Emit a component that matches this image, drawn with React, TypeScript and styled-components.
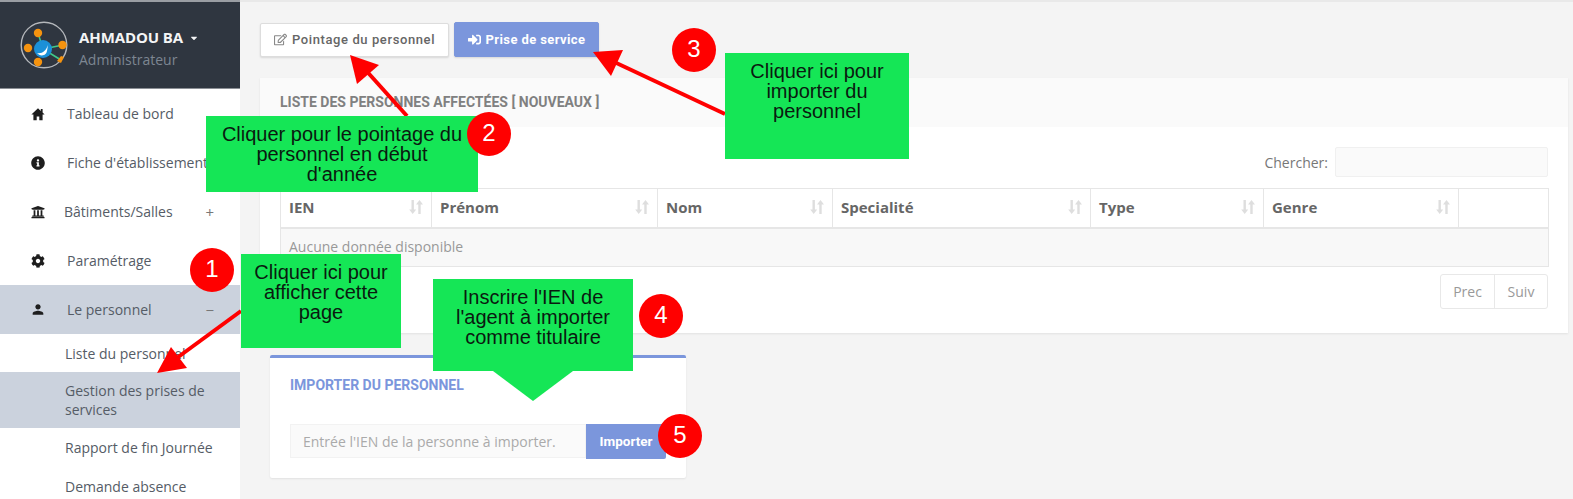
import React, { FC } from 'react'
import styled, { createGlobalStyle } from 'styled-components'
import { FaInfoCircle, FaUniversity, FaCog, FaRegEdit, FaSignInAlt, FaCaretDown } from 'react-icons/fa'
import { MdPerson } from 'react-icons/md'

const GlobalStyle = createGlobalStyle`
html, body {
 margin: 0;
 padding: 0;
 background: #f4f4f4;
}
* {
 box-sizing: border-box;
}
`

const HomeIcon: FC = () => (
 <svg viewBox="0 0 14 14" width="14" height="14" fill="currentColor">
  <path d="M7 1.2 0.4 7.6h2v5.6h3.3V9.4h2.6v3.8h3.3V7.6h2l-2-2V2h-1.8v1.9z" />
 </svg>
)

const menu = [
 { label: 'Tableau de bord', icon: <HomeIcon /> },
 { label: "Fiche d'établissement", icon: <FaInfoCircle /> },
 { label: 'Bâtiments/Salles', icon: <FaUniversity />, sign: '+', shift: true },
 { label: 'Paramétrage', icon: <FaCog /> },
 { label: 'Le personnel', icon: <MdPerson size={19} />, sign: '−', active: true },
]

const subMenu = [
 { label: 'Liste du personnel', height: 38 },
 { label: 'Gestion des prises de services', height: 56, active: true },
 { label: 'Rapport de fin Journée', height: 38 },
 { label: 'Demande absence', height: 40 },
]

const columns = [
 { label: 'IEN', width: 151 },
 { label: 'Prénom', width: 226 },
 { label: 'Nom', width: 175 },
 { label: 'Specialité', width: 258 },
 { label: 'Type', width: 173 },
 { label: 'Genre', width: 195 },
 { label: '', width: 90 },
]

const SortIcon: FC = () => (
 <SortSvg viewBox="0 0 14 16" width="14" height="16">
  <path d="M2.5 1h2.4v9.5h2.3L3.7 15 .2 10.5h2.3z" />
  <path d="M9.3 15h2.4V5.5H14L10.5 1 7 5.5h2.3z" />
 </SortSvg>
)

const Logo: FC = () => (
 <svg width="48" height="48" viewBox="0 0 48 48">
  <circle cx="24" cy="24" r="22.8" fill="#2f3640" stroke="#b4b7bb" strokeWidth="1.4" />
  <g stroke="#3fc98a" strokeWidth="1.6">
   <line x1="23" y1="28" x2="43" y2="24" />
   <line x1="23" y1="28" x2="41" y2="39" />
   <line x1="23" y1="28" x2="18" y2="12" />
  </g>
  <g fill="#f5930f">
   <circle cx="18" cy="12" r="4.2" />
   <circle cx="8" cy="27" r="4.2" />
   <circle cx="42.5" cy="24" r="4.2" />
   <circle cx="18" cy="41" r="4.2" />
   <path d="M41 35l3 1-3 6-4-2z" />
  </g>
  <circle cx="23" cy="28" r="9" fill="#1b90d8" />
  <path d="M17 32c5 1 9-2 11-8-1 6-1 9-4 10-3 1-5 0-7-2z" fill="#fff" />
 </svg>
)

const App: FC = () => {
 return (
  <Page>
   <GlobalStyle />
   <Sidebar>
    <Profile>
     <Logo />
     <ProfileText>
      <ProfileName>AHMADOU BA <FaCaretDown size={10} /></ProfileName>
      <ProfileRole>Administrateur</ProfileRole>
     </ProfileText>
    </Profile>
    {menu.map(item => (
     <MenuItem key={item.label} $active={item.active}>
      <MenuIcon>{item.icon}</MenuIcon>
      <MenuLabel $shift={item.shift}>{item.label}</MenuLabel>
      {item.sign && <MenuSign>{item.sign}</MenuSign>}
     </MenuItem>
    ))}
    {subMenu.map(item => (
     <SubItem key={item.label} $active={item.active} $height={item.height}>
      {item.label}
     </SubItem>
    ))}
   </Sidebar>

   <Main>
    <Toolbar>
     <WhiteButton><FaRegEdit size={13} /> Pointage du personnel</WhiteButton>
     <BlueButton><FaSignInAlt size={13} /> Prise de service</BlueButton>
    </Toolbar>

    <Card>
     <CardHeader>LISTE DES PERSONNES AFFECTÉES [ NOUVEAUX ]</CardHeader>
     <CardBody>
      <SearchRow>
       <SearchLabel>Chercher:</SearchLabel>
       <SearchInput />
      </SearchRow>
      <Table>
       <thead>
        <tr>
         {columns.map((col, i) => (
          <HeadCell key={i} style={{ width: col.width }}>
           <HeadInner>
            {col.label}
            {col.label && <SortIcon />}
           </HeadInner>
          </HeadCell>
         ))}
        </tr>
       </thead>
       <tbody>
        <tr>
         <EmptyCell colSpan={7}>Aucune donnée disponible</EmptyCell>
        </tr>
       </tbody>
      </Table>
      <TableFooter>
       <FooterInfo>Aucune donnée</FooterInfo>
       <Pager>
        <PagerButton>Prec</PagerButton>
        <PagerButton>Suiv</PagerButton>
       </Pager>
      </TableFooter>
     </CardBody>
    </Card>

    <ImportCard>
     <ImportTitle>IMPORTER DU PERSONNEL</ImportTitle>
     <ImportRow>
      <ImportInput placeholder="Entrée l'IEN de la personne à importer." />
      <ImportButton>Importer</ImportButton>
     </ImportRow>
    </ImportCard>
   </Main>

   <Arrows viewBox="0 0 1573 499" width="1573" height="499">
    <g stroke="#ff0000" strokeWidth="4" fill="none">
     <line x1="241" y1="311" x2="170" y2="363" />
     <line x1="407" y1="116" x2="362" y2="66" />
     <line x1="725" y1="114" x2="610" y2="60" />
    </g>
    <g fill="#ff0000">
     <polygon points="157,373 171,347 187,368" />
     <polygon points="350,55 379,65 357,84" />
     <polygon points="593,52 623,50 611,76" />
    </g>
   </Arrows>

   <Callout $x={206} $y={116} $w={272} $h={76}>
    Cliquer pour le pointage du<br />personnel en début<br />d'année
   </Callout>
   <Callout $x={725} $y={53} $w={184} $h={106}>
    Cliquer ici pour<br />importer du<br />personnel
   </Callout>
   <Callout $x={241} $y={254} $w={160} $h={94}>
    Cliquer ici pour<br />afficher cette<br />page
   </Callout>
   <Callout $x={433} $y={279} $w={200} $h={92}>
    Inscrire l'IEN de<br />l'agent à importer<br />comme titulaire
    <CalloutTail />
   </Callout>

   <Badge $x={212} $y={270}>1</Badge>
   <Badge $x={489} $y={134}>2</Badge>
   <Badge $x={694} $y={50}>3</Badge>
   <Badge $x={661} $y={316}>4</Badge>
   <Badge $x={680} $y={436}>5</Badge>
  </Page>
 )
}

export default App


const Page = styled.div`
position: relative;
display: flex;
width: 1573px;
height: 499px;
overflow: hidden;
background: #f4f4f4;
font-family: "Open Sans", sans-serif;
`

const Sidebar = styled.div`
flex: 0 0 240px;
background: #fff;
`

const Profile = styled.div`
height: 89px;
display: flex;
align-items: center;
gap: 11px;
padding-left: 20px;
background: #2f3640;
border-top: 2px solid #9a9ea3;
border-bottom: 1px solid #8b8f95;
`

const ProfileText = styled.div`
display: flex;
flex-direction: column;
gap: 3px;
padding-top: 5px;
`

const ProfileName = styled.div`
font-family: "Open Sans", sans-serif;
font-size: 15px;
font-weight: 700;
letter-spacing: -0.1px;
color: #f4f5f6;
svg {
 vertical-align: middle;
 margin-left: 2px;
}
`

const ProfileRole = styled.div`
font-size: 14px;
color: #7d8692;
`

const MenuItem = styled.div<{ $active?: boolean }>`
height: 49px;
display: flex;
align-items: center;
padding-left: 30px;
padding-right: 26px;
background: ${p => (p.$active ? '#cbd2dd' : '#fff')};
`

const MenuIcon = styled.span`
width: 16px;
display: flex;
justify-content: center;
color: #1e1e1e;
font-size: 14px;
`

const MenuLabel = styled.span<{ $shift?: boolean }>`
margin-left: ${p => (p.$shift ? '18px' : '21px')};
font-size: 14px;
color: #555c66;
white-space: nowrap;
`

const MenuSign = styled.span`
margin-left: auto;
font-size: 15px;
color: #777;
`

const SubItem = styled.div<{ $active?: boolean; $height: number }>`
height: ${p => p.$height}px;
display: flex;
align-items: center;
padding: 0 20px 0 65px;
font-size: 14px;
line-height: 19px;
color: #555c66;
background: ${p => (p.$active ? '#cbd2dd' : '#fff')};
`

const Main = styled.div`
flex: 1;
min-width: 0;
padding: 20px 5px 0 20px;
border-top: 2px solid #e9e9e9;
`

const Toolbar = styled.div`
display: flex;
align-items: center;
gap: 5px;
height: 35px;
`

const WhiteButton = styled.button`
width: 189px;
height: 34px;
display: flex;
align-items: center;
justify-content: center;
gap: 5px;
padding: 0;
background: #fff;
border: 1px solid #ddd;
border-radius: 2px;
box-shadow: 0 1px 2px rgba(0, 0, 0, 0.12);
font-family: Roboto, sans-serif;
font-size: 13px;
font-weight: 500;
letter-spacing: 0.6px;
color: #666;
svg {
 color: #888;
}
`

const BlueButton = styled(WhiteButton)`
width: 145px;
height: 35px;
background: #7b96dc;
border-color: #7b96dc;
font-weight: 700;
color: #fff;
letter-spacing: 0.4px;
svg {
 color: #fff;
}
`

const Card = styled.div`
margin-top: 21px;
background: #fff;
box-shadow: 0 1px 2px rgba(0, 0, 0, 0.08);
`

const CardHeader = styled.div`
height: 49px;
display: flex;
align-items: center;
padding: 0 0 2px 20px;
background: #fafafa;
font-family: Roboto, sans-serif;
font-size: 14px;
font-weight: 700;
color: #808080;
`

const CardBody = styled.div`
padding: 20px 20px 24px 20px;
`

const SearchRow = styled.div`
display: flex;
justify-content: flex-end;
align-items: center;
gap: 7px;
height: 30px;
`

const SearchLabel = styled.span`
font-size: 14px;
color: #777;
`

const SearchInput = styled.div`
width: 213px;
height: 30px;
background: #fafafa;
border: 1px solid #f0f0f0;
border-radius: 2px;
`

const Table = styled.table`
width: 100%;
margin-top: 11px;
border-collapse: collapse;
table-layout: fixed;
`

const HeadCell = styled.th`
height: 39px;
padding: 0 8px 2px;
border: 1px solid #e6e6e6;
border-bottom-width: 2px;
text-align: left;
font-size: 15px;
font-weight: 700;
color: #666;
`

const HeadInner = styled.div`
display: flex;
align-items: center;
justify-content: space-between;
`

const SortSvg = styled.svg`
fill: #dedede;
`

const EmptyCell = styled.td`
height: 39px;
padding: 0 8px 2px;
background: #f8f8f8;
border: 1px solid #e6e6e6;
font-size: 14px;
color: #999;
`

const TableFooter = styled.div`
display: flex;
align-items: flex-start;
justify-content: space-between;
margin-top: 7px;
`

const FooterInfo = styled.span`
margin: 6px 0 0 17px;
font-size: 14px;
color: #999;
`

const Pager = styled.div`
display: flex;
height: 35px;
border: 1px solid #e8e8e8;
border-radius: 3px;
`

const PagerButton = styled.span`
width: 53px;
display: flex;
align-items: center;
justify-content: center;
font-size: 14px;
color: #999;
& + & {
 border-left: 1px solid #e8e8e8;
}
`

const ImportCard = styled.div`
width: 416px;
height: 123px;
margin: 22px 0 0 10px;
padding: 19px 20px 0;
background: #fff;
border-top: 3px solid #7b96dc;
border-radius: 2px;
box-shadow: 0 1px 2px rgba(0, 0, 0, 0.08);
`

const ImportTitle = styled.div`
font-family: Roboto, sans-serif;
font-size: 14px;
line-height: 16px;
font-weight: 700;
color: #7b96dc;
`

const ImportRow = styled.div`
display: flex;
margin-top: 31px;
`

const ImportInput = styled.input`
width: 296px;
height: 34px;
padding: 0 12px;
background: #fafafa;
border: 1px solid #f2f2f2;
outline: none;
font-family: "Open Sans", sans-serif;
font-size: 14px;
&::placeholder {
 color: #aaa;
}
`

const ImportButton = styled.button`
width: 80px;
height: 35px;
padding: 0 0 2px;
background: #7b96dc;
border: none;
border-radius: 0 2px 2px 0;
font-family: Roboto, sans-serif;
font-size: 13.5px;
font-weight: 700;
color: #fff;
`

const Arrows = styled.svg`
position: absolute;
left: 0;
top: 0;
pointer-events: none;
`

const Callout = styled.div<{ $x: number; $y: number; $w: number; $h: number }>`
position: absolute;
left: ${p => p.$x}px;
top: ${p => p.$y}px;
width: ${p => p.$w}px;
height: ${p => p.$h}px;
padding-top: 8px;
background: #15e656;
font-family: "Liberation Sans", Arial, sans-serif;
font-size: 20px;
line-height: 20px;
text-align: center;
color: #0a1a10;
`

const CalloutTail = styled.div`
position: absolute;
left: 60px;
top: 100%;
width: 0;
height: 0;
border-left: 40px solid transparent;
border-right: 40px solid transparent;
border-top: 30px solid #15e656;
`

const Badge = styled.div<{ $x: number; $y: number }>`
position: absolute;
left: ${p => p.$x - 22}px;
top: ${p => p.$y - 22}px;
width: 44px;
height: 44px;
padding-bottom: 3px;
display: flex;
align-items: center;
justify-content: center;
border-radius: 50%;
background: #ff0000;
font-family: "Liberation Sans", Arial, sans-serif;
font-size: 24px;
color: #fff;
`
